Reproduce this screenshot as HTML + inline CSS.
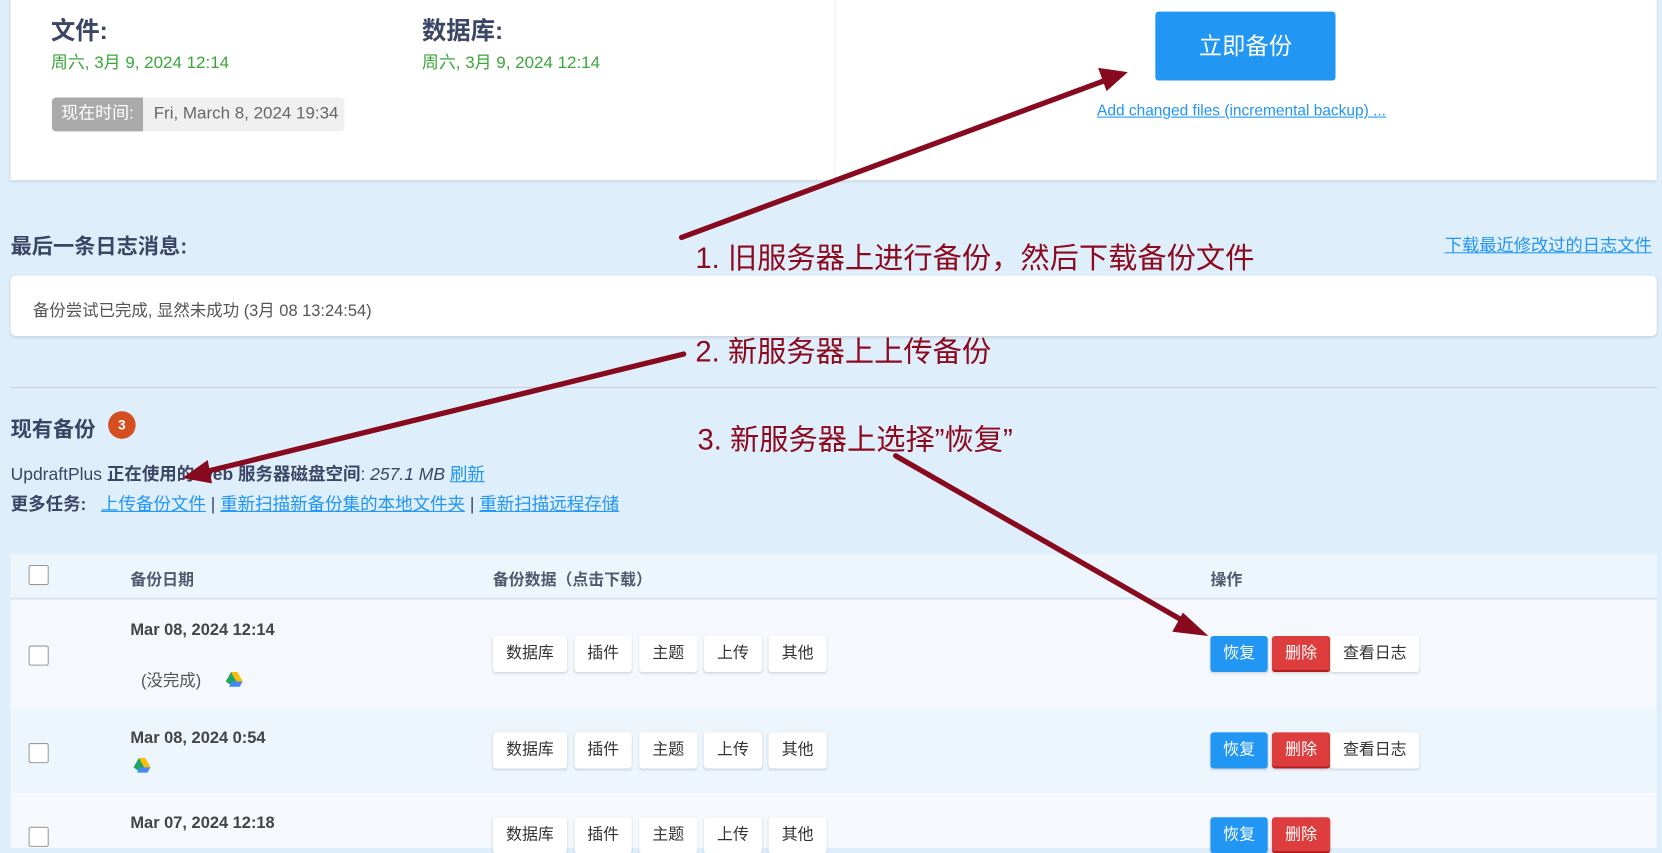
<!DOCTYPE html>
<html><head><meta charset="utf-8"><style>
*{margin:0;padding:0;box-sizing:border-box}
html,body{width:1662px;height:842px;overflow:hidden;background:#dfeefb}
#w{position:absolute;left:0;top:0;width:1568px;height:800px;transform:scale(1.05995);transform-origin:0 0;font-family:"Liberation Sans","Noto Sans CJK SC",sans-serif;color:#3c434a}
.a{position:absolute;white-space:nowrap}
.card{background:#fff;box-shadow:0 1px 3px rgba(0,0,0,.12)}
.h{font-weight:bold;color:#3b4564}
.g{color:#3aa63a;font-size:16px}
.lk{color:#2196f3;text-decoration:underline}
.b{position:absolute;height:34px;background:#fff;border-radius:3px;box-shadow:0 1px 2px rgba(0,0,0,.15);font-size:15px;text-align:center;line-height:34px;color:#333}
.cb{position:absolute;width:19px;height:19px;border:1px solid #999;background:#fff;border-radius:2px}
.r{color:#8b0a1e;font-size:27.6px}
</style></head><body><div id="w">
<div class="a card" style="left:10px;top:-4px;width:1553px;height:174px"></div>
<div class="a" style="left:787px;top:0;width:1px;height:170px;background:#eee"></div>
<div class="a h" style="left:48px;top:10px;font-size:23px">文件:</div>
<div class="a g" style="left:48px;top:45px">周六, 3月 9, 2024 12:14</div>
<div class="a h" style="left:398px;top:10px;font-size:23px">数据库:</div>
<div class="a g" style="left:398px;top:45px">周六, 3月 9, 2024 12:14</div>
<div class="a" style="left:49px;top:92px;width:86px;height:32px;background:#aaa;border-radius:4px 0 0 4px;color:#fff;font-size:16px;line-height:32px;text-align:center">现在时间:</div>
<div class="a" style="left:135px;top:92px;width:190px;height:32px;background:#f0f0f0;border-radius:0 4px 4px 0;color:#666;font-size:16px;line-height:32px;padding-left:10px">Fri, March 8, 2024 19:34</div>
<div class="a" style="left:1090px;top:11px;width:170px;height:65px;background:#2196f3;border-radius:3px;color:#fff;font-size:22px;line-height:65px;text-align:center">立即备份</div>
<div class="a lk" style="left:1035px;top:97px;font-size:14.6px">Add changed files (incremental backup) ...</div>
<div class="a h" style="left:10px;top:216px;font-size:20px">最后一条日志消息:</div>
<div class="a lk" style="left:1363px;top:218px;font-size:16.3px">下载最近修改过的日志文件</div>
<div class="a card" style="left:10px;top:260px;width:1553px;height:57px;border-radius:5px"></div>
<div class="a" style="left:31px;top:281px;font-size:15.5px;color:#555">备份尝试已完成, 显然未成功 (3月 08 13:24:54)</div>
<div class="a" style="left:10px;top:365px;width:1553px;height:1px;background:#ccd"></div>
<div class="a h" style="left:10px;top:389px;font-size:20px">现有备份</div>
<div class="a" style="left:102px;top:388px;width:26px;height:26px;border-radius:13px;background:#d54e21;color:#fff;font-size:13px;font-weight:bold;text-align:center;line-height:26px">3</div>
<div class="a" style="left:10px;top:434px;font-size:16.5px;color:#3b4564">UpdraftPlus <b>正在使用的 web 服务器磁盘空间</b>: <i>257.1 MB</i> <span class="lk">刷新</span></div>
<div class="a" style="left:10px;top:462px;font-size:16.5px;color:#3b4564"><b>更多任务:</b> &nbsp; <span class="lk">上传备份文件</span> | <span class="lk">重新扫描新备份集的本地文件夹</span> | <span class="lk">重新扫描远程存储</span></div>
<div class="a" style="left:10px;top:523px;width:1553px;height:42px;background:#eef6fd;border-bottom:1px solid #d5dde5"></div>
<div class="a" style="left:10px;top:566px;width:1553px;height:102px;background:#f5f9fd"></div>
<div class="a" style="left:10px;top:668px;width:1553px;height:80px;background:#eef6fd"></div>
<div class="a" style="left:10px;top:748px;width:1553px;height:52px;background:#f5f9fd"></div>
<div class="cb" style="left:27px;top:533px"></div>
<div class="a h" style="left:123px;top:536px;font-size:15px;color:#50596f">备份日期</div>
<div class="a h" style="left:465px;top:536px;font-size:15px;color:#50596f">备份数据（点击下载）</div>
<div class="a h" style="left:1142px;top:536px;font-size:15px;color:#50596f">操作</div>
<div class="cb" style="left:27px;top:609px"></div>
<div class="a h" style="left:123px;top:586px;font-size:15.5px;color:#444">Mar 08, 2024 12:14</div>
<div class="a" style="left:133px;top:630px;font-size:15.5px;color:#555">(没完成)</div>
<svg class="a" style="left:213px;top:634px" width="16" height="14" viewBox="0 0 16 14"><path d="M5 0h6l5 9h-6z" fill="#fbbc04"/><path d="M5 0l5 9-3 5L0 9z" fill="#1fa463"/><path d="M3 14l3-5h10l-3 5z" fill="#4688f4"/></svg>
<div class="cb" style="left:27px;top:701px"></div>
<div class="a h" style="left:123px;top:688px;font-size:15.5px;color:#444">Mar 08, 2024 0:54</div>
<svg class="a" style="left:126px;top:715px" width="16" height="14" viewBox="0 0 16 14"><path d="M5 0h6l5 9h-6z" fill="#fbbc04"/><path d="M5 0l5 9-3 5L0 9z" fill="#1fa463"/><path d="M3 14l3-5h10l-3 5z" fill="#4688f4"/></svg>
<div class="cb" style="left:27px;top:780px"></div>
<div class="a h" style="left:123px;top:768px;font-size:15.5px;color:#444">Mar 07, 2024 12:18</div>
<div id="rows"></div>
<svg class="a" style="left:0;top:0" width="1568" height="794">
<g stroke="#870a1e" stroke-width="5" stroke-linecap="round" fill="#870a1e">
<line x1="643" y1="224" x2="1045" y2="75"/>
<line x1="645" y1="334" x2="190" y2="446"/>
<line x1="845" y1="430" x2="1122" y2="589"/>
</g>
<g fill="#870a1e">
<polygon points="1064,68 1036,64 1044,86"/>
<polygon points="172,451 196,434 200,456"/>
<polygon points="1140,600 1116,578 1106,596"/>
</g>
</svg>
<div class="a r" style="left:656px;top:221px">1. 旧服务器上进行备份，然后下载备份文件</div>
<div class="a r" style="left:656px;top:309px">2. 新服务器上上传备份</div>
<div class="a r" style="left:658px;top:392px">3. 新服务器上选择”恢复”</div>
</div>
<script>
var h='';[600,691,771].forEach(function(y,i){
[[465,70,'数据库'],[542,54,'插件'],[603,55,'主题'],[664,55,'上传'],[725,55,'其他']].forEach(function(b){h+='<div class="b" style="left:'+b[0]+'px;top:'+y+'px;width:'+b[1]+'px">'+b[2]+'</div>'});
h+='<div class="b" style="left:1142px;top:'+y+'px;width:54px;background:#2196f3;color:#fff">恢复</div>';
h+='<div class="b" style="left:1200px;top:'+y+'px;width:55px;background:#dd3d3d;color:#fff;border-bottom:2px solid #b51f1f">删除</div>';
if(i<2)h+='<div class="b" style="left:1255px;top:'+y+'px;width:84px">查看日志</div>';
});document.getElementById('rows').outerHTML=h;
</script>
</body></html>
